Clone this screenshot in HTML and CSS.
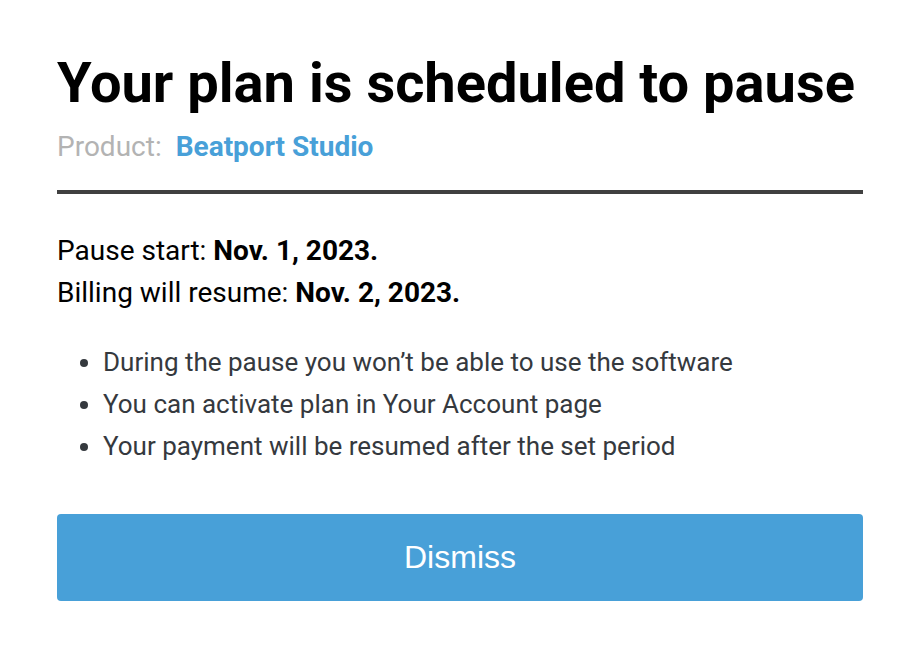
FILE: index.html
```html
<!DOCTYPE html>
<html lang="en">
<head>
<meta charset="utf-8">
<title>Your plan is scheduled to pause</title>
<link rel="stylesheet" href="styles.css">
</head>
<body>
<main class="dialog">
  <header class="head">
    <h1 class="title">Your plan is scheduled to pause</h1>
    <p class="product"><span class="product-label">Product:</span><span class="product-name">Beatport Studio</span></p>
  </header>
  <section class="details">
    <p class="row">Pause start: <strong>Nov. 1, 2023.</strong></p>
    <p class="row">Billing will resume: <strong>Nov. 2, 2023.</strong></p>
    <ul class="notes">
      <li>During the pause you won’t be able to use the software</li>
      <li>You can activate plan in Your Account page</li>
      <li>Your payment will be resumed after the set period</li>
    </ul>
  </section>
  <button class="dismiss" type="button">Dismiss</button>
</main>
</body>
</html>
```
FILE: styles.css
```css
html, body {
  margin: 0;
  padding: 0;
  background: #ffffff;
}
body {
  font-family: Roboto, "Liberation Sans", Arial, sans-serif;
  color: #000;
}
.dialog {
  width: 806px;
  padding: 50px 57px 0;
  display: flex;
  flex-direction: column;
}
.head {
  border-bottom: 4px solid #404040;
  padding-bottom: 26px;
}
.title {
  margin: 0;
  font-size: 56px;
  font-weight: 700;
  line-height: 66px;
  color: #000;
}
.product {
  margin: 14px 0 0;
  font-size: 28px;
  line-height: 34px;
  display: flex;
  gap: 14px;
}
.product-label {
  color: #b3b3b3;
}
.product-name {
  color: #48a0d8;
  font-weight: 700;
}
.details {
  padding-top: 36px;
}
.row {
  margin: 0;
  font-size: 28px;
  line-height: 42px;
}
.row strong {
  font-weight: 700;
}
.notes {
  margin: 27px 0 0;
  padding-left: 46px;
  color: #35393e;
  font-size: 26px;
  line-height: 42px;
}
.dismiss {
  margin-top: 47px;
  height: 87px;
  border: 0;
  border-radius: 4px;
  background: #48a0d8;
  color: #fff;
  font-family: "Liberation Sans", Arial, sans-serif;
  font-size: 32px;
  cursor: pointer;
}
```
